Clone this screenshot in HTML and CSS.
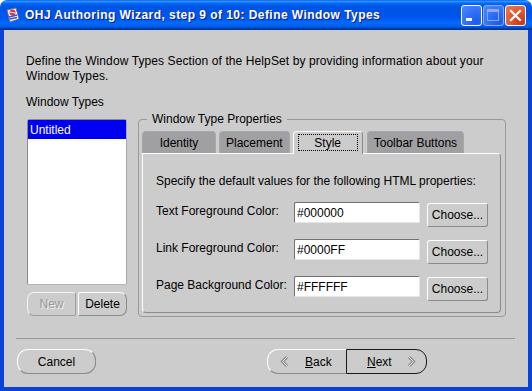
FILE: index.html
```html
<!DOCTYPE html>
<html>
<head>
<meta charset="utf-8">
<link rel="stylesheet" href="styles.css">
</head>
<body>
<div class="window">
  <header class="titlebar">
    <svg class="app-icon" viewBox="0 0 16 16" width="16" height="16">
      <path d="M2 3 L11 1 L14 12 L5 15 Z" fill="#fff" stroke="#6b6b9a" stroke-width="1"/>
      <circle cx="7.5" cy="5.5" r="3" fill="#d8304a"/>
      <path d="M5 5 L10 6" stroke="#fff" stroke-width="1"/>
      <path d="M4 10 L12 8 M5 12 L12 10.5" stroke="#3a4fc8" stroke-width="1.3"/>
    </svg>
    <span class="title">OHJ Authoring Wizard, step 9 of 10: Define Window Types</span>
    <div class="caption-buttons">
      <span class="cap-btn cap-blue"><svg viewBox="0 0 21 21" width="21" height="21"><rect x="5" y="13" width="6" height="3" fill="#fff"/></svg></span>
      <span class="cap-btn cap-blue cap-disabled"><svg viewBox="0 0 21 21" width="21" height="21"><rect x="4.5" y="4.5" width="11" height="11" fill="none" stroke="#8fa8ec" stroke-width="1"/><rect x="4" y="4" width="12" height="3" fill="#8fa8ec"/></svg></span>
      <span class="cap-btn cap-close"><svg viewBox="0 0 21 21" width="21" height="21"><path d="M6 6 L15 15 M15 6 L6 15" stroke="#fff" stroke-width="2.2" stroke-linecap="square"/></svg></span>
    </div>
  </header>
  <main class="content">
    <p class="intro">Define the Window Types Section of the HelpSet by providing information about your<br>Window Types.</p>
    <div class="main-row">
      <div class="types-col">
        <div class="label">Window Types</div>
        <div class="list">
          <div class="list-item selected">Untitled</div>
        </div>
        <div class="btn-pair">
          <button class="btn seg-left disabled">New</button>
          <button class="btn seg-right">Delete</button>
        </div>
      </div>
      <fieldset class="group">
        <legend>Window Type Properties</legend>
        <div class="tabs">
          <div class="tab tab-wide">Identity</div>
          <div class="tab">Placement</div>
          <div class="tab selected">Style</div>
          <div class="tab tab-last">Toolbar Buttons</div>
        </div>
        <div class="panel">
          <p class="specify">Specify the default values for the following HTML properties:</p>
          <div class="form-grid">
            <span class="form-label">Text Foreground Color:</span>
            <div class="field">#000000</div>
            <button class="btn choose">Choose...</button>
            <span class="form-label">Link Foreground Color:</span>
            <div class="field">#0000FF</div>
            <button class="btn choose">Choose...</button>
            <span class="form-label">Page Background Color:</span>
            <div class="field">#FFFFFF</div>
            <button class="btn choose">Choose...</button>
          </div>
        </div>
      </fieldset>
    </div>
    <hr class="sep">
    <div class="footer">
      <button class="btn pill">Cancel</button>
      <div class="nav">
        <button class="btn nav-back">
          <svg viewBox="0 0 9 11" width="9" height="11"><path d="M7 1 L2.5 5.5 L7 10" fill="none" stroke="#8c8c8c" stroke-width="3"/><path d="M7 1 L2.5 5.5 L7 10" fill="none" stroke="#ececec" stroke-width="1"/></svg>
          <span><u>B</u>ack</span>
        </button>
        <button class="btn nav-next">
          <span><u>N</u>ext</span>
          <svg viewBox="0 0 9 11" width="9" height="11"><path d="M2 1 L6.5 5.5 L2 10" fill="none" stroke="#8c8c8c" stroke-width="3"/><path d="M2 1 L6.5 5.5 L2 10" fill="none" stroke="#ececec" stroke-width="1"/></svg>
        </button>
      </div>
    </div>
  </main>
</div>
</body>
</html>
```
FILE: styles.css
```css
html, body {
  margin: 0;
  background: #ffffff;
}
body {
  font-family: "Liberation Sans", Arial, sans-serif;
  font-size: 12px;
  color: #000;
}
.window {
  width: 532px;
  height: 391px;
  display: flex;
  flex-direction: column;
}
.titlebar {
  height: 30px;
  flex: none;
  display: flex;
  align-items: center;
  padding: 0 6px 0 5px;
  border-radius: 7px 7px 0 0;
  background: linear-gradient(#0058ee 0%, #3a93ff 4%, #288eff 6%, #127dff 8%, #036ffc 10%, #0262ee 14%, #0057e5 20%, #0054e3 24%, #0055eb 56%, #005bf5 66%, #026afe 76%, #0062ef 86%, #0052d6 92%, #0040ab 94%, #003092 100%);
}
.app-icon {
  flex: none;
  margin-right: 4px;
}
.title {
  flex: 1;
  color: #fff;
  font-weight: bold;
  font-size: 12px;
  letter-spacing: 0.45px;
  white-space: nowrap;
  text-shadow: 1px 1px #0a1a80;
}
.caption-buttons {
  display: flex;
  gap: 1px;
}
.cap-btn {
  width: 21px;
  height: 21px;
  box-sizing: border-box;
  border: 1px solid #fff;
  border-radius: 3px;
  display: flex;
  align-items: center;
  justify-content: center;
  overflow: hidden;
}
.cap-btn svg {
  flex: none;
}
.cap-blue {
  background: radial-gradient(circle at 80% 85%, #1a5ef0 0%, #2a6cf6 40%, #4c8bf8 100%);
}
.cap-disabled {
  border-color: #8fa8ec;
}
.cap-close {
  background: radial-gradient(circle at 80% 85%, #c7361b 0%, #e0552f 45%, #ea7a58 100%);
}
.content {
  flex: 1;
  background: #cccccc;
  border: solid #0842d8;
  border-width: 0 4px 4px 4px;
  padding: 24px 22px 0 22px;
  display: flex;
  flex-direction: column;
  min-height: 0;
}
.intro {
  margin: 0;
  line-height: 15px;
  letter-spacing: 0.1px;
  white-space: nowrap;
}
.main-row {
  display: flex;
  gap: 11px;
  margin-top: 11px;
}
.types-col {
  width: 101px;
  display: flex;
  flex-direction: column;
}
.label {
  line-height: 15px;
}
.list {
  margin: 9px 0 0 1px;
  width: 100px;
  height: 166px;
  box-sizing: border-box;
  background: #fff;
  border: 1px solid #8a8a8a;
  border-right-color: #a8a8a8;
  border-bottom-color: #b4b4b4;
  border-radius: 3px 3px 2px 2px;
}
.list-item {
  height: 19px;
  box-sizing: border-box;
  padding: 1px 0 0 2px;
  line-height: 18px;
}
.list-item.selected {
  background: #0000f0;
  color: #fff;
}
.btn {
  font-family: "Liberation Sans", Arial, sans-serif;
  font-size: 12px;
  color: #000;
  background: #cccccc;
  border: 1px solid;
  border-color: #fdfdfd #8a8a8a #8a8a8a #fdfdfd;
  padding: 0;
  margin: 0;
  height: 24px;
  box-sizing: border-box;
  line-height: 22px;
}
.btn-pair {
  display: flex;
  gap: 2px;
  margin: 7px 0 0 1px;
}
.btn-pair .btn {
  width: 49px;
}
.seg-left {
  border-radius: 7px 2px 2px 7px;
}
.seg-right {
  border-radius: 2px 7px 7px 2px;
}
.btn.disabled {
  color: #999;
  text-shadow: 1px 1px #f2f2f2;
  border-color: #f4f4f4 #9c9c9c #9c9c9c #f4f4f4;
}
.group {
  margin: 17px 0 0 0;
  padding: 4px 4px 3px 3px;
  width: 368px;
  box-sizing: border-box;
  min-inline-size: 0;
  border: 1px solid #9a9a9a;
  border-radius: 4px;
}
.group legend {
  margin-left: 5px;
  padding: 0 5px;
  line-height: 15px;
}
.tabs {
  display: flex;
  gap: 3px;
  align-items: flex-start;
  margin-bottom: -1px;
  position: relative;
  z-index: 1;
}
.tab {
  height: 22px;
  min-width: 70px;
  box-sizing: border-box;
  padding: 2px 6px 0;
  line-height: 19px;
  text-align: center;
  background: #a09fa1;
  border: 1px solid #a8a7a9;
  border-bottom: 0;
  border-radius: 4px 4px 0 0;
}
.tab-wide {
  min-width: 74px;
}
.tab-last {
  margin-left: 1px;
}
.tab.selected {
  height: 23px;
  background: #cccccc;
  border-color: #fdfdfd #8a8a8a #cccccc #fdfdfd;
  position: relative;
}
.tab.selected::after {
  content: "";
  position: absolute;
  left: 4px;
  right: 4px;
  top: 2px;
  bottom: 3px;
  border: 1px dotted #000;
}
.panel {
  height: 160px;
  box-sizing: border-box;
  border: 1px solid;
  border-color: #fdfdfd #8a8a8a #8a8a8a #fdfdfd;
  border-radius: 0 4px 4px 4px;
  padding: 20px 12px 0 13px;
}
.specify {
  margin: 0;
  line-height: 15px;
  white-space: nowrap;
}
.form-grid {
  display: grid;
  grid-template-columns: 138px 126px 68px;
  grid-auto-rows: 25px;
  row-gap: 12px;
  margin-top: 13px;
}
.form-label {
  line-height: 15px;
  margin-top: 2px;
  white-space: nowrap;
}
.field {
  height: 21px;
  box-sizing: border-box;
  background: #fff;
  border: 1px solid;
  border-color: #707070 #e6e6e6 #e6e6e6 #707070;
  border-radius: 2px;
  padding: 1px 2px 0;
  line-height: 18px;
}
.choose {
  width: 61px;
  margin: 1px 0 0 7px;
  border-radius: 3px;
}
.sep {
  margin: 21px -9px 0 -10px;
  border: 0;
  border-top: 1px solid #999;
  height: 0;
}
.footer {
  display: flex;
  align-items: flex-start;
  margin: 10px 0 0 -9px;
}
.pill {
  width: 79px;
  height: 25px;
  border-radius: 11px;
}
.nav {
  display: flex;
  margin-left: auto;
  margin-right: 79px;
}
.nav-back, .nav-next {
  height: 25px;
  display: flex;
  align-items: center;
  gap: 16px;
}
.nav-back {
  width: 79px;
  padding-left: 12px;
  border-right: 0;
  border-radius: 11px 0 0 11px;
}
.nav-next {
  width: 81px;
  padding-left: 20px;
  gap: 15px;
  border-color: #1a1a1a;
  border-radius: 0 11px 11px 0;
}
```
